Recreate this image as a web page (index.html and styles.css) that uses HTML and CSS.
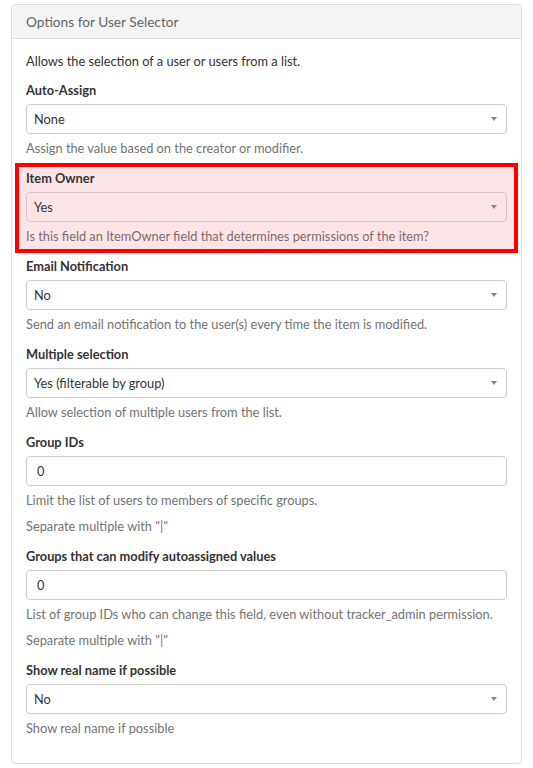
FILE: index.html
```html
<!DOCTYPE html>
<html>
<head>
<meta charset="utf-8">
<link rel="stylesheet" href="styles.css">
</head>
<body>
<div class="panel">
  <div class="panel-heading">Options for User Selector</div>
  <div class="panel-body">
    <p class="intro">Allows the selection of a user or users from a list.</p>

    <div class="form-group">
      <label class="label">Auto-Assign</label>
      <div class="select"><span class="value">None</span><span class="caret"></span></div>
      <div class="help">Assign the value based on the creator or modifier.</div>
    </div>

    <div class="form-group highlighted">
      <label class="label">Item Owner</label>
      <div class="select"><span class="value">Yes</span><span class="caret"></span></div>
      <div class="help">Is this field an ItemOwner field that determines permissions of the item?</div>
    </div>

    <div class="form-group">
      <label class="label">Email Notification</label>
      <div class="select"><span class="value">No</span><span class="caret"></span></div>
      <div class="help">Send an email notification to the user(s) every time the item is modified.</div>
    </div>

    <div class="form-group">
      <label class="label">Multiple selection</label>
      <div class="select"><span class="value">Yes (filterable by group)</span><span class="caret"></span></div>
      <div class="help">Allow selection of multiple users from the list.</div>
    </div>

    <div class="form-group">
      <label class="label">Group IDs</label>
      <div class="input">0</div>
      <div class="help">Limit the list of users to members of specific groups.</div>
      <div class="help">Separate multiple with "|"</div>
    </div>

    <div class="form-group">
      <label class="label">Groups that can modify autoassigned values</label>
      <div class="input">0</div>
      <div class="help">List of group IDs who can change this field, even without tracker_admin permission.</div>
      <div class="help">Separate multiple with "|"</div>
    </div>

    <div class="form-group">
      <label class="label">Show real name if possible</label>
      <div class="select"><span class="value">No</span><span class="caret"></span></div>
      <div class="help">Show real name if possible</div>
    </div>
  </div>
</div>
</body>
</html>
```
FILE: styles.css
```css
html, body {
  margin: 0;
  padding: 0;
  background: #fff;
}
body {
  padding: 4px 11px;
  font-family: Lato, "Open Sans", sans-serif;
  font-size: 12.8px;
  line-height: 20px;
  color: #333;
}
.panel {
  border: 1px solid #ddd;
  border-radius: 4px;
  background: #fff;
}
.panel-heading {
  background: #f5f5f5;
  border-bottom: 1px solid #ddd;
  border-radius: 3px 3px 0 0;
  padding: 7px 14px 6px;
  color: #666;
  font-size: 13.7px;
}
.panel-body {
  padding: 12px 14px 15px;
}
.intro {
  margin: 0 0 9px;
}
.form-group {
  display: flex;
  flex-direction: column;
  margin-bottom: 10px;
}
.label {
  font-weight: bold;
  color: #333;
  margin-bottom: 4px;
}
.select, .input {
  height: 30px;
  box-sizing: border-box;
  border: 1px solid #ccc;
  border-radius: 4px;
  display: flex;
  align-items: center;
  color: #333;
}
.select {
  padding: 0 9px 0 7px;
  justify-content: space-between;
}
.input {
  padding: 0 10px;
}
.caret {
  width: 0;
  height: 0;
  border-left: 3px solid transparent;
  border-right: 3px solid transparent;
  border-top: 4px solid #888;
}
.help {
  color: #737373;
  margin-top: 4px;
}
.help + .help {
  margin-top: 6px;
}
.highlighted {
  margin: -5px -11px 3px;
  padding: 1px 7px 3px;
  border: 4px solid #ff0000;
  background: #fde5e7;
}
.highlighted .select {
  background: transparent;
  border-color: #d9c4c6;
}
.highlighted .help {
  color: #7d6b6d;
}
```
